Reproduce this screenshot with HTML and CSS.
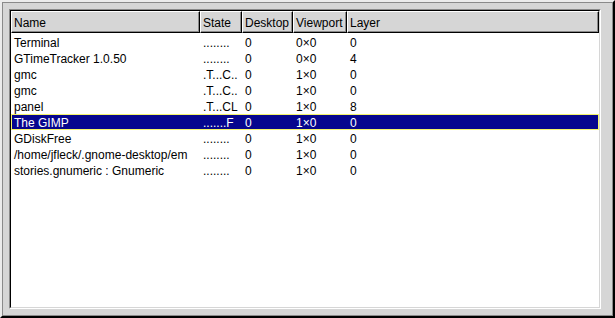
FILE: index.html
```html
<!DOCTYPE html>
<html>
<head>
<meta charset="utf-8">
<link rel="stylesheet" href="styles.css">
</head>
<body>
<div class="window">
  <div class="frame">
    <div class="clist">
      <div class="content">
        <div class="header">
          <div class="hbtn">Name</div>
          <div class="hbtn">State</div>
          <div class="hbtn">Desktop</div>
          <div class="hbtn">Viewport</div>
          <div class="hbtn">Layer</div>
        </div>
        <div class="rows">
          <div class="row"><span>Terminal</span><span>........</span><span>0</span><span>0×0</span><span>0</span></div>
          <div class="row"><span>GTimeTracker 1.0.50</span><span>........</span><span>0</span><span>0×0</span><span>4</span></div>
          <div class="row"><span>gmc</span><span>.T...C..</span><span>0</span><span>1×0</span><span>0</span></div>
          <div class="row"><span>gmc</span><span>.T...C..</span><span>0</span><span>1×0</span><span>0</span></div>
          <div class="row"><span>panel</span><span>.T...CL</span><span>0</span><span>1×0</span><span>8</span></div>
          <div class="row selected"><span>The GIMP</span><span>.......F</span><span>0</span><span>1×0</span><span>0</span></div>
          <div class="row"><span>GDiskFree</span><span>........</span><span>0</span><span>1×0</span><span>0</span></div>
          <div class="row"><span>/home/jfleck/.gnome-desktop/em</span><span>........</span><span>0</span><span>1×0</span><span>0</span></div>
          <div class="row"><span>stories.gnumeric : Gnumeric</span><span>........</span><span>0</span><span>1×0</span><span>0</span></div>
        </div>
      </div>
    </div>
  </div>
</div>
</body>
</html>
```
FILE: styles.css
```css
html, body {
  margin: 0;
  padding: 0;
}
body {
  font-family: "Liberation Sans", Arial, sans-serif;
  font-size: 12px;
  color: #000;
  background: #d6d6d6;
}
.window {
  box-sizing: border-box;
  width: 615px;
  height: 318px;
  background: #d6d6d6;
  border-style: solid;
  border-width: 2px;
  border-color: #ececec #000 #000 #ececec;
}
.frame {
  box-sizing: border-box;
  height: 100%;
  border: 1px solid #8a8a8a;
  padding: 6px 11px 6px 6px;
  display: flex;
}
.clist {
  flex: 1;
  display: flex;
  border-style: solid;
  border-width: 1px;
  border-color: #8a8a8a #fff #fff #8a8a8a;
}
.content {
  flex: 1;
  background: #fff;
  border-style: solid;
  border-width: 1px;
  border-color: #000 #d6d6d6 #d6d6d6 #000;
  display: flex;
  flex-direction: column;
  overflow: hidden;
}
.header {
  display: grid;
  grid-template-columns: 189px 42px 51px 54px 1fr;
  height: 22px;
}
.hbtn {
  box-sizing: border-box;
  background: #d6d6d6;
  border-style: solid;
  border-width: 1px;
  border-color: #fff #000 #000 #fff;
  box-shadow: inset -1px -1px 0 #8a8a8a;
  padding: 1px 0 0 2px;
  display: flex;
  align-items: center;
  white-space: nowrap;
  overflow: hidden;
}
.rows {
  display: flex;
  flex-direction: column;
  padding-top: 1px;
}
.row {
  display: grid;
  grid-template-columns: 189px 42px 51px 54px 1fr;
  height: 16px;
}
.row span {
  box-sizing: border-box;
  height: 16px;
  padding: 2px 0 0 3px;
  line-height: 14px;
  white-space: nowrap;
  overflow: hidden;
}
.row.selected {
  background: #06068e;
  color: #fff;
  box-shadow: inset 0 0 0 1px #f4f46a;
}
```
